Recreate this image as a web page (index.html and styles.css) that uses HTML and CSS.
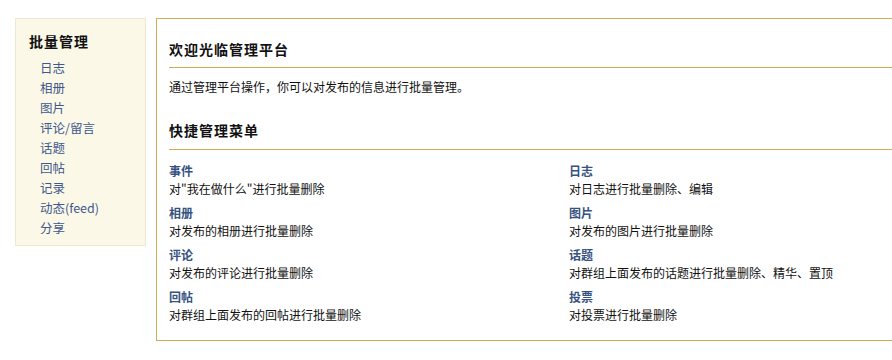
FILE: index.html
```html
<!DOCTYPE html>
<html lang="zh-CN">
<head>
<meta charset="utf-8">
<title>批量管理</title>
<link rel="stylesheet" href="styles.css">
</head>
<body>
<div class="page">
  <div class="sidebar">
    <h3 class="side-title">批量管理</h3>
    <ul class="side-list">
      <li><a href="#">日志</a></li>
      <li><a href="#">相册</a></li>
      <li><a href="#">图片</a></li>
      <li><a href="#">评论/留言</a></li>
      <li><a href="#">话题</a></li>
      <li><a href="#">回帖</a></li>
      <li><a href="#">记录</a></li>
      <li><a href="#">动态(feed)</a></li>
      <li><a href="#">分享</a></li>
    </ul>
  </div>
  <div class="main">
    <h2 class="sec-title">欢迎光临管理平台</h2>
    <p class="intro">通过管理平台操作，你可以对发布的信息进行批量管理。</p>
    <h2 class="sec-title second">快捷管理菜单</h2>
    <div class="menu-grid">
      <div class="item"><a class="item-title" href="#">事件</a><div class="item-desc">对"我在做什么"进行批量删除</div></div>
      <div class="item"><a class="item-title" href="#">日志</a><div class="item-desc">对日志进行批量删除、编辑</div></div>
      <div class="item"><a class="item-title" href="#">相册</a><div class="item-desc">对发布的相册进行批量删除</div></div>
      <div class="item"><a class="item-title" href="#">图片</a><div class="item-desc">对发布的图片进行批量删除</div></div>
      <div class="item"><a class="item-title" href="#">评论</a><div class="item-desc">对发布的评论进行批量删除</div></div>
      <div class="item"><a class="item-title" href="#">话题</a><div class="item-desc">对群组上面发布的话题进行批量删除、精华、置顶</div></div>
      <div class="item"><a class="item-title" href="#">回帖</a><div class="item-desc">对群组上面发布的回帖进行批量删除</div></div>
      <div class="item"><a class="item-title" href="#">投票</a><div class="item-desc">对投票进行批量删除</div></div>
    </div>
  </div>
</div>
</body>
</html>
```

FILE: styles.css
```css
html, body {
  margin: 0;
  padding: 0;
  background: #ffffff;
}
body {
  font-family: "Noto Sans CJK SC", "Liberation Sans", sans-serif;
  font-size: 12px;
  color: #111;
}
.page {
  display: flex;
  align-items: flex-start;
  gap: 10px;
  padding: 18px 0 0 15px;
}
.sidebar {
  flex: 0 0 auto;
  box-sizing: border-box;
  width: 131px;
  border: 1px solid #efe8cd;
  background: #fcf8e7;
  padding: 12px 0 7px 13px;
}
.side-title {
  margin: 0;
  font-size: 14px;
  letter-spacing: 1px;
  line-height: 20px;
  font-weight: bold;
  color: #111;
}
.side-list {
  list-style: none;
  margin: 7px 0 0 0;
  padding: 0 0 0 11px;
}
.side-list li {
  line-height: 20px;
  height: 20px;
  font-size: 12.5px;
}
.side-list a {
  color: #3d5a8e;
  text-decoration: none;
}
.main {
  flex: 1 1 auto;
  min-width: 0;
  border: 1px solid #d3ab57;
  border-right: none;
  padding: 20px 0 16px 12px;
}
.sec-title {
  margin: 0;
  font-size: 14px;
  letter-spacing: 1px;
  line-height: 20px;
  font-weight: bold;
  color: #111;
  padding-bottom: 8px;
  border-bottom: 1px solid #d3ab57;
}
.sec-title.second {
  margin-top: 24px;
  padding-bottom: 9px;
}
.intro {
  margin: 10px 0 0 0;
  line-height: 18px;
}
.menu-grid {
  display: grid;
  grid-template-columns: 400px 1fr;
  row-gap: 6px;
  margin-top: 12px;
}
.item-title {
  display: block;
  font-weight: bold;
  line-height: 18px;
  color: #37527f;
  text-decoration: none;
}
.item-desc {
  line-height: 18px;
}
```
